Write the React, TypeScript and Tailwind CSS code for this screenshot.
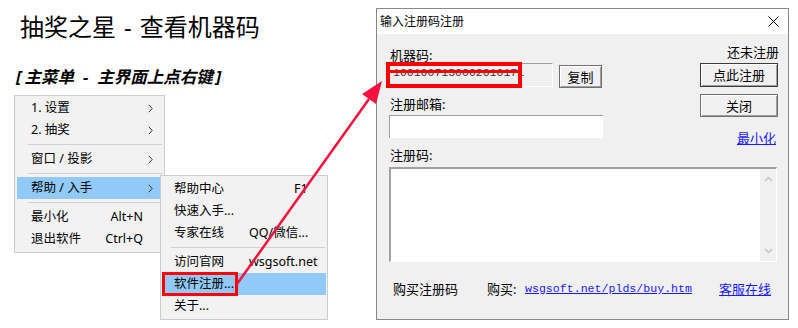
import React from "react";

const cjk = "font-['Noto_Sans','Noto_Sans_CJK_SC',sans-serif]";

function Chevron() {
  return (
    <svg width="5" height="9" viewBox="0 0 5 9" className="shrink-0">
      <path d="M0.8 0.8 L4.2 4.5 L0.8 8.2" fill="none" stroke="#333" strokeWidth="1" />
    </svg>
  );
}

function MenuItem({ label, shortcut, sub, active }: { label: string; shortcut?: string; sub?: boolean; active?: boolean }) {
  return (
    <div
      className={
        "flex h-[22px] items-center justify-between pl-[14px] text-[12.5px] text-black " +
        (active ? "bg-[#91c9f7] " : "") +
        (sub ? "pr-[9px]" : "pr-[19px]")
      }
    >
      <span>{label}</span>
      {sub ? <Chevron /> : <span>{shortcut}</span>}
    </div>
  );
}

function Sep({ inset }: { inset: string }) {
  return (
    <div className="flex h-[7px] items-center">
      <div className={"h-px flex-1 bg-[#d0d0d0] " + inset} />
    </div>
  );
}

function SubItem({ label, extra, extraPad, active, marked }: { label: string; extra?: string; extraPad?: string; active?: boolean; marked?: boolean }) {
  return (
    <div className={"relative flex h-[22px] items-center pl-[12px] text-[12.5px] text-black " + (active ? "bg-[#91c9f7]" : "")}>
      <span className="w-[75px] whitespace-nowrap">{label}</span>
      {extra && <span className={"whitespace-nowrap " + (extraPad ?? "")}>{extra}</span>}
      {marked && <div className="absolute left-0 top-[-1px] h-[24px] w-[76px] border-[3px] border-[#ff0000]" />}
    </div>
  );
}

function WinButton({ children, className, strong }: { children: React.ReactNode; className: string; strong?: boolean }) {
  return (
    <div
      className={
        "flex items-center justify-center bg-[#f0f0f0] text-[13px] text-black shadow-[inset_1px_1px_0_#ffffff,inset_-1px_-1px_0_#a0a0a0] border " +
        (strong ? "border-[#3c3c3c] " : "border-[#6f6f6f] ") +
        className
      }
    >
      {children}
    </div>
  );
}

export default function App() {
  return (
    <div className={"relative flex h-[328px] w-[798px] overflow-hidden bg-white " + cjk}>
      {/* Left: title + cascaded menu */}
      <div className="w-[376px] shrink-0">
        <h1 className="ml-[20px] mt-[13px] whitespace-nowrap text-[24px] leading-[28px] font-normal text-black">
          抽奖之星<span className="mx-[8px]">-</span>查看机器码
        </h1>
        <p className="ml-[16px] mt-[26px] whitespace-nowrap text-[16.5px] leading-[20px] font-bold italic text-black">
          <span className="mr-[3px]">[</span>主菜单<span className="mx-[9px]">-</span>主界面上点右键<span className="ml-[3px]">]</span>
        </p>

        <div className="ml-[14px] mt-[8px] flex items-start">
          <div className="w-[151px] shrink-0 border border-[#cccccc] bg-[#f2f2f2] px-[2px] pt-[1px] pb-[2px]">
            <MenuItem label="1. 设置" sub />
            <MenuItem label="2. 抽奖" sub />
            <Sep inset="ml-[11px]" />
            <MenuItem label="窗口 / 投影" sub />
            <Sep inset="ml-[11px]" />
            <MenuItem label="帮助 / 入手" sub active />
            <Sep inset="ml-[11px]" />
            <MenuItem label="最小化" shortcut="Alt+N" />
            <MenuItem label="退出软件" shortcut="Ctrl+Q" />
          </div>

          <div className="relative z-10 -ml-[5px] mt-[80px] w-[168px] shrink-0 border border-[#cccccc] bg-[#f2f2f2] px-[1px] pt-[2px] pb-[2px]">
            <SubItem label="帮助中心" extra="F1" extraPad="pl-[45px]" />
            <SubItem label="快速入手..." />
            <SubItem label="专家在线" extra="QQ/微信..." />
            <Sep inset="ml-[9px] mr-[1px]" />
            <SubItem label="访问官网" extra="wsgsoft.net" />
            <SubItem label="软件注册..." active marked />
            <SubItem label="关于..." />
          </div>
        </div>
      </div>

      {/* Right: registration dialog */}
      <div className="mt-[8px] flex h-[312px] w-[413px] shrink-0 flex-col border border-[#888888] bg-[#f0f0f0]">
        <div className="flex h-[25px] shrink-0 items-center justify-between bg-white pl-[3px] pr-[9px]">
          <span className="text-[12px] leading-[14px] text-black">输入注册码注册</span>
          <svg width="11" height="11" viewBox="0 0 11 11">
            <path d="M0.5 0.5 L10.5 10.5 M10.5 0.5 L0.5 10.5" stroke="#000" strokeWidth="1" />
          </svg>
        </div>

        <div className="flex-1 pl-[11px] pr-[10px] text-[13px] leading-[16px] text-black">
          <div className="flex">
            <div className="w-[215px]">
              <div className="ml-[2px] mt-[13px] h-[16px]">机器码:</div>
              <div className="flex items-start">
                <div className="relative h-[24px] w-[165px] border-t border-l border-[#a0a0a0] border-r-white border-b-white border-r border-b bg-[#f0f0f0] pl-[4px] pt-[2px] font-['Liberation_Mono',monospace] text-[11.5px] leading-[14px] text-[#333]">
                  1001007150002010171
                  <div className="absolute left-[-3px] top-[-2px] h-[26px] w-[136px] border-[4px] border-[#ff0000]" />
                  <div className="absolute left-[-3px] top-[6px] h-[3px] w-[136px] bg-[#ff0000]" />
                </div>
                <WinButton className="ml-[6px] mt-[2px] h-[23px] w-[43px]">复制</WinButton>
              </div>
              <div className="ml-[2px] mt-[8px] h-[16px]">注册邮箱:</div>
              <div className="ml-[1px] mt-[3px] h-[23px] w-[214px] border-t border-l border-[#a0a0a0] bg-white" />
            </div>

            <div className="ml-auto w-[78px]">
              <div className="mt-[10px] h-[16px] text-right -mr-[1px]">还未注册</div>
              <WinButton strong className="mt-[3px] h-[24px] w-[78px]">点此注册</WinButton>
              <WinButton className="mt-[7px] h-[23px] w-[78px]">关闭</WinButton>
              <div className="mt-[13px] h-[16px] pr-[2px] text-right text-[#1a1aff] underline">最小化</div>
            </div>
          </div>

          <div className="ml-[2px] mt-[1px] h-[16px]">注册码:</div>
          <div className="ml-[1px] mt-[4px] flex h-[95px] w-[388px] border-t-2 border-l-2 border-[#a0a0a0] border-r border-b border-r-white border-b-white bg-white">
            <div className="flex-1" />
            <div className="flex w-[16px] flex-col items-center justify-between bg-[#f0f0f0] py-[7px]">
              <svg width="9" height="6" viewBox="0 0 9 6">
                <path d="M1 5 L4.5 1.5 L8 5" fill="none" stroke="#c4c4c4" strokeWidth="1.5" />
              </svg>
              <svg width="9" height="6" viewBox="0 0 9 6">
                <path d="M1 1 L4.5 4.5 L8 1" fill="none" stroke="#c4c4c4" strokeWidth="1.5" />
              </svg>
            </div>
          </div>

          <div className="mt-[19px] flex h-[16px] items-center whitespace-nowrap">
            <span className="ml-[5px] w-[94px]">购买注册码</span>
            <span className="w-[38px]">购买:</span>
            <span className="w-[194px] font-['Liberation_Mono',monospace] text-[11.6px] text-[#1a1aff] underline">wsgsoft.net/plds/buy.htm</span>
            <span className="text-[#1a1aff] underline">客服在线</span>
          </div>
        </div>
      </div>

      {/* Red pointer arrow overlay */}
      <svg className="pointer-events-none absolute left-0 top-0 z-20" width="798" height="328" viewBox="0 0 798 328">
        <line x1="237" y1="284" x2="369" y2="99" stroke="#f5113d" strokeWidth="2.5" />
        <polygon points="382,81 376,104 362,94" fill="#f5113d" />
      </svg>
    </div>
  );
}
